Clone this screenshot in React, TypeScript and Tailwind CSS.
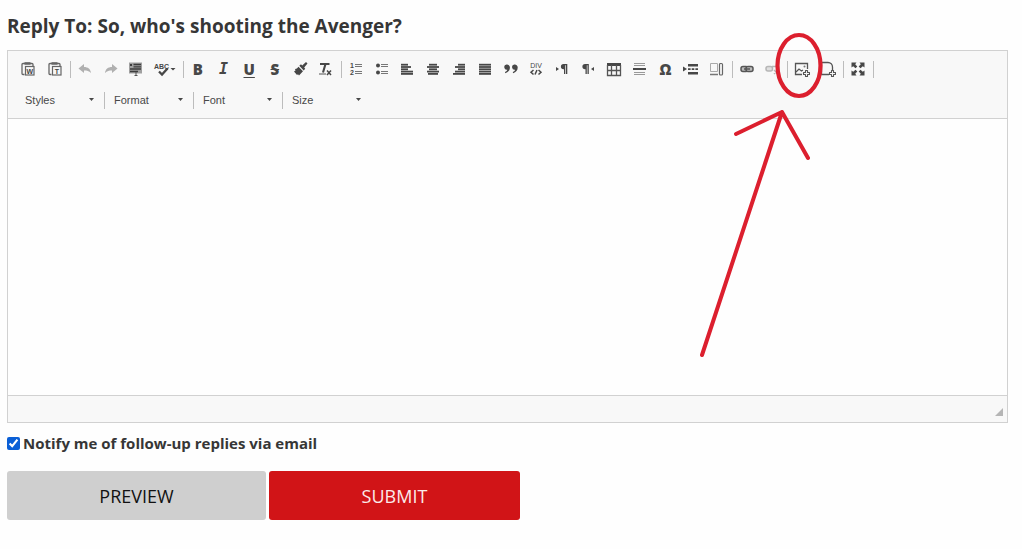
import { useState } from 'react';
import type { ReactNode } from 'react';

interface Tool {
  id: string;
  label: string;
  icon: ReactNode;
  disabled?: boolean;
  wide?: boolean;
}

interface ToolGroup {
  id: string;
  width: string;
  tools: Tool[];
}

interface Combo {
  id: string;
  options: string[];
}

function Svg({ children }: { children: ReactNode }) {
  return (
    <svg width="16" height="16" viewBox="0 0 16 16" fill="none" stroke="none" className="shrink-0">
      {children}
    </svg>
  );
}

function Glyph({ children, className = '' }: { children: ReactNode; className?: string }) {
  return <span className={`text-[15px] leading-4 font-extrabold ${className}`}>{children}</span>;
}

function Clipboard({ letter }: { letter: string }) {
  return (
    <Svg>
      <path d="M4.5 13.5H3a1 1 0 0 1-1-1V3.500a1 1 0 0 1 1-1h9a1 1 0 0 1 1 1v2" stroke="#666" strokeWidth="1.3" />
      <path d="M4.500 1.200h6v2.500h-6z" fill="#666" />
      <rect x="5.5" y="5.5" width="8.500" height="8.500" stroke="#666" strokeWidth="1.2" />
      <text x="9.800" y="12.500" textAnchor="middle" fontSize="7" fontWeight="bold" fontFamily="Liberation Sans, sans-serif" fill="#444">
        {letter}
      </text>
    </Svg>
  );
}

function Lines({ rows }: { rows: number[][] }) {
  return (
    <Svg>
      {rows.map(([x, width], i) => (
        <rect key={i} x={x} y={2.8 + i * 2.3} width={width} height="1.8" fill="#474747" />
      ))}
    </Svg>
  );
}

const plus = (
  <path d="M11.500 9.500h2v2h2v2h-2v2h-2v-2h-2v-2h2z" fill="#f8f8f8" stroke="#555" strokeWidth="1.100" strokeLinejoin="round" />
);

const groups: ToolGroup[] = [
  {
    id: 'clipboard',
    width: 'w-[53px]',
    tools: [
      { id: 'word', label: 'Paste from Word', icon: <Clipboard letter="W" /> },
      { id: 'plain', label: 'Paste as plain text', icon: <Clipboard letter="T" /> },
    ],
  },
  {
    id: 'undo',
    width: 'w-[109px]',
    tools: [
      {
        id: 'undo',
        label: 'Undo',
        disabled: true,
        icon: <Svg><path d="M1.5 7.5 7 3v3c4 0 6.500 2 7 6-2-2-4-2.500-7-2.500V12z" fill="#474747" /></Svg>,
      },
      {
        id: 'redo',
        label: 'Redo',
        disabled: true,
        icon: <Svg><path d="M14.500 7.500 9 3v3c-4 0-6.500 2-7 6 2-2 4-2.500 7-2.500V12z" fill="#474747" /></Svg>,
      },
      {
        id: 'select',
        label: 'Select all',
        icon: (
          <Svg>
            <rect x="1" y="1.500" width="13" height="11" fill="#a0a0a0" />
            <path d="M2 3h2v2H2zM5.500 2.800h7.500v1.500H5.500zM5.500 5.200h7.500v1.400H5.500zM2 7.300h11v1.500H2zM2 9.700h8v1.500H2z" fill="#3d3d3d" />
            <path d="M8 11v3.500M6.500 14.500h3" stroke="#555" />
          </Svg>
        ),
      },
      {
        id: 'spell',
        label: 'Check spelling',
        wide: true,
        icon: (
          <svg width="24" height="16" viewBox="0 0 24 16" fill="none">
            <text x="1" y="8" fontSize="7" fontWeight="bold" fontFamily="Liberation Sans, sans-serif" fill="#474747">ABC</text>
            <path d="m6 10.500 3 3 5.500-6" stroke="#474747" strokeWidth="2.300" />
            <path d="M17.500 7h5L20 9.500z" fill="#474747" />
          </svg>
        ),
      },
    ],
  },
  {
    id: 'basic',
    width: 'w-[154px]',
    tools: [
      { id: 'bold', label: 'Bold', icon: <Glyph>B</Glyph> },
      {
        id: 'italic',
        label: 'Italic',
        icon: <span className="font-['DejaVu_Sans_Mono',monospace] text-[15px] leading-4 font-bold italic">I</span>,
      },
      { id: 'underline', label: 'Underline', icon: <Glyph className="underline decoration-1 underline-offset-2">U</Glyph> },
      { id: 'strike', label: 'Strikethrough', icon: <Glyph className="line-through">S</Glyph> },
      {
        id: 'copyformat',
        label: 'Copy formatting',
        icon: (
          <Svg>
            <path d="M14.500 2.600 13 1 9.200 4.400 8 3.200 6.300 4.800l4.400 4.700 1.500-1.700-1-1.200z" fill="#474747" />
            <path d="M5.500 5.800 10 10.300l-4 4.200-1-1.200-1 .7-3-3.500 1.500-1-.5-1.500c2 0 2.500-1 3.500-2.200z" fill="#474747" />
          </Svg>
        ),
      },
      {
        id: 'clear',
        label: 'Remove format',
        icon: (
          <Svg>
            <path d="M2 3h9.500M7.500 3 5 11.500" stroke="#474747" strokeWidth="2.100" />
            <path d="M1 13H8" stroke="#777" strokeWidth="1.300" />
            <path d="m9 9.500 4 4.500m0-4.500-4 4.500" stroke="#474747" strokeWidth="1.500" />
          </Svg>
        ),
      },
    ],
  },
  {
    id: 'paragraph',
    width: 'w-[387px]',
    tools: [
      {
        id: 'ol',
        label: 'Numbered list',
        icon: (
          <Svg>
            <g fontSize="7" fontWeight="bold" fontFamily="Liberation Sans, sans-serif" fill="#474747">
              <text x="2" y="7">1</text>
              <text x="2" y="14">2</text>
            </g>
            <path d="M7 3.500h7M7 5.500h7M7 10.500h7M7 12.500h7" stroke="#777" strokeWidth="1.200" />
          </Svg>
        ),
      },
      {
        id: 'ul',
        label: 'Bulleted list',
        icon: (
          <Svg>
            <circle cx="4" cy="4.500" r="2" fill="#474747" />
            <circle cx="4" cy="11.500" r="2" fill="#474747" />
            <path d="M7 3.500h7M7 5.500h7M7 10.500h7M7 12.500h7" stroke="#777" strokeWidth="1.200" />
          </Svg>
        ),
      },
      { id: 'left', label: 'Align left', icon: <Lines rows={[[2, 7], [2, 10], [2, 7], [2, 12], [2, 12]]} /> },
      { id: 'center', label: 'Center', icon: <Lines rows={[[4, 8], [2, 12], [4, 8], [2, 12], [3, 10]]} /> },
      { id: 'right', label: 'Align right', icon: <Lines rows={[[7, 7], [4, 10], [7, 7], [4, 10], [2, 12]]} /> },
      { id: 'justify', label: 'Justify', icon: <Lines rows={[[2, 12], [2, 12], [2, 12], [2, 12], [2, 12]]} /> },
      {
        id: 'quote',
        label: 'Block quote',
        icon: (
          <Svg>
            <path d="M3.500 3.500a2.900 2.900 0 0 1 3.400 2.900c0 2.700-1.600 4.800-4.600 5.800l-.3-1.200C3.500 10.200 4.200 9.500 4.300 8.700a2.600 2.600 0 0 1-.8-5.200zM11.300 3.500a2.900 2.900 0 0 1 3.400 2.900c0 2.700-1.600 4.800-4.600 5.800l-.3-1.200c1.500-.8 2.200-1.500 2.300-2.300a2.600 2.600 0 0 1-.8-5.200z" fill="#474747" />
          </Svg>
        ),
      },
      {
        id: 'div',
        label: 'Create div container',
        icon: (
          <Svg>
            <text x="8" y="7" textAnchor="middle" fontSize="7" fontFamily="Liberation Sans, sans-serif" fill="#474747">DIV</text>
            <path d="M5.500 9 3 11.200l2.500 2.300M10.500 9l2.500 2.200-2.500 2.300M9 9l-2 4.500" stroke="#474747" strokeWidth="1.500" />
          </Svg>
        ),
      },
      {
        id: 'ltr',
        label: 'Text direction from left to right',
        icon: (
          <Svg>
            <path d="M2 6v4l3-2z" fill="#474747" />
            <path d="M9.500 3a2.600 2.600 0 0 0 0 5.200H10V13h1.300V4.200h.7V13h1.300V3z" fill="#474747" />
          </Svg>
        ),
      },
      {
        id: 'rtl',
        label: 'Text direction from right to left',
        icon: (
          <Svg>
            <path d="M14 6v4l-3-2z" fill="#474747" />
            <path d="M5 3a2.600 2.600 0 0 0 0 5.200h.5V13h1.300V4.200h.7V13h1.300V3z" fill="#474747" />
          </Svg>
        ),
      },
      {
        id: 'table',
        label: 'Table',
        icon: (
          <Svg>
            <path d="M1 2h14v3H1z" fill="#474747" />
            <path d="M1.500 4v10.500h13V4M5.500 4v10.500M10.500 4v10.500M1 9.500h14" stroke="#555" strokeWidth="1.300" />
          </Svg>
        ),
      },
      {
        id: 'hr',
        label: 'Insert horizontal line',
        icon: (
          <Svg>
            <path d="M2 2.500h11M2 4.500h11M2 11.500h11M2 13.500h11" stroke="#999" />
            <path d="M1 7h13v2H1z" fill="#474747" />
          </Svg>
        ),
      },
      { id: 'char', label: 'Insert special character', icon: <Glyph>Ω</Glyph> },
      {
        id: 'pagebreak',
        label: 'Insert page break',
        icon: (
          <Svg>
            <path d="M0 5.500v5L4 8z" fill="#474747" />
            <path d="M5 3h10v2.500H5zM5 11h10v2.500H5z" fill="#474747" />
            <path d="M5 8.200h10" stroke="#474747" strokeWidth="1.700" strokeDasharray="2.600 1.100" />
          </Svg>
        ),
      },
      {
        id: 'layout',
        label: 'Page layout',
        icon: (
          <Svg>
            <path d="M1.500 2.500h7v8h-7z" stroke="#aaa" />
            <path d="M1 13.500h8" stroke="#777" strokeWidth="1.500" />
            <rect x="10.500" y="2.500" width="3" height="11.500" rx="1" stroke="#666" strokeWidth="1.200" />
          </Svg>
        ),
      },
    ],
  },
  {
    id: 'links',
    width: 'w-[51px]',
    tools: [
      {
        id: 'link',
        label: 'Link',
        icon: (
          <Svg>
            <rect x="2" y="5.500" width="7" height="5" rx="2" fill="#bbb" stroke="#555" strokeWidth="1.500" />
            <rect x="7" y="5.500" width="7" height="5" rx="2" fill="#bbb" stroke="#555" strokeWidth="1.500" />
            <path d="M5 8h6" stroke="#555" strokeWidth="1.500" />
          </Svg>
        ),
      },
      {
        id: 'unlink',
        label: 'Unlink',
        disabled: true,
        icon: (
          <Svg>
            <rect x="2" y="5.500" width="6.500" height="4.500" rx="2" fill="#bbb" stroke="#555" strokeWidth="1.500" />
            <path d="M8 5.500h3.500a2 2 0 0 1 2 3M10 9l4 4m0-4-4 4" stroke="#555" strokeWidth="1.400" />
          </Svg>
        ),
      },
    ],
  },
  {
    id: 'media',
    width: 'w-[52px]',
    tools: [
      {
        id: 'image',
        label: 'Add image',
        icon: (
          <Svg>
            <path d="M8 13.500H1.500v-11h12V8" stroke="#555" strokeWidth="1.300" />
            <circle cx="10.500" cy="5.500" r="1" fill="#777" />
            <path d="m2 11 3-3 2.500 2 1.500-1" stroke="#555" strokeWidth="1.200" />
            {plus}
          </Svg>
        ),
      },
      {
        id: 'file',
        label: 'Add file',
        icon: (
          <Svg>
            <path d="M9 13.500H1.500v-12H8c2.500 0 4.500 2 4.500 4.500V9" stroke="#555" strokeWidth="1.300" />
            {plus}
          </Svg>
        ),
      },
    ],
  },
  {
    id: 'view',
    width: 'w-[26px]',
    tools: [
      {
        id: 'maximize',
        label: 'Maximize',
        icon: (
          <Svg>
            <path d="M1.500 1.500h5L5.200 3.200 7.300 5.500 5.500 7.300 3.200 5.200 1.500 6.500zM14.500 1.500v5l-1.700-1.300-2.300 2.100-1.800-1.800 2.100-2.300L9.500 1.500zM1.500 14.500v-5l1.700 1.300 2.300-2.100 1.800 1.800-2.100 2.300L6.500 14.500zM14.500 14.500h-5l1.300-1.700-2.100-2.300 1.800-1.800 2.300 2.100L14.500 9.500z" fill="#474747" />
          </Svg>
        ),
      },
    ],
  },
];

const combos: Combo[] = [
  { id: 'styles', options: ['Styles', 'Marker', 'Big', 'Small'] },
  { id: 'format', options: ['Format', 'Normal', 'Heading 1', 'Heading 2'] },
  { id: 'font', options: ['Font', 'Arial', 'Georgia', 'Verdana'] },
  { id: 'size', options: ['Size', '8', '10', '12'] },
];

function Separator() {
  return <span className="ml-0.5 mr-px h-[17px] w-px shrink-0 bg-[#bcbcbc]" />;
}

function Toolbar() {
  return (
    <div className="flex flex-col gap-[3px] border-b border-[#d1d1d1] bg-[#f8f8f8] px-[7px] py-1">
      <div className="flex flex-wrap">
        {groups.map((group) => (
          <div key={group.id} className="flex h-7 items-center">
            <div className={`flex ${group.width}`}>
              {group.tools.map((tool) => (
                <button
                  key={tool.id}
                  type="button"
                  aria-label={tool.label}
                  disabled={tool.disabled}
                  className={`flex h-7 items-center justify-center text-[#474747] disabled:opacity-40 ${
                    tool.wide ? 'w-8 shrink-0' : 'min-w-0 flex-1'
                  }`}
                >
                  {tool.icon}
                </button>
              ))}
            </div>
            <Separator />
          </div>
        ))}
      </div>

      <div className="flex flex-wrap pl-0.5">
        {combos.map((combo, i) => (
          <div key={combo.id} className="flex h-7 items-center">
            <div className="relative w-[85px]">
              <select
                aria-label={combo.options[0]}
                className="h-7 w-full appearance-none bg-transparent pl-2 font-['Liberation_Sans',sans-serif] text-[11px] text-[#484848]"
              >
                {combo.options.map((option) => (
                  <option key={option}>{option}</option>
                ))}
              </select>
              <svg width="5" height="3" viewBox="0 0 5 3" className="pointer-events-none absolute top-3 right-2">
                <path d="M0 0h5L2.500 3z" fill="#474747" />
              </svg>
            </div>
            {i < combos.length - 1 && <Separator />}
          </div>
        ))}
      </div>
    </div>
  );
}

/* Hand-drawn circle and arrow pointing at the image button */
function Annotation() {
  return (
    <svg
      width="120"
      height="340"
      viewBox="700 30 120 340"
      fill="none"
      stroke="#dc1f2e"
      className="pointer-events-none absolute top-[30px] left-[700px] overflow-visible"
    >
      <ellipse cx="799" cy="65.500" rx="21.500" ry="30.500" strokeWidth="4.200" />
      <path d="M702 355 782 112M736 134l46-22 26 46" strokeWidth="4" strokeLinecap="round" strokeLinejoin="round" />
    </svg>
  );
}

export default function App() {
  const [body, setBody] = useState('');
  const [notify, setNotify] = useState(true);

  return (
    <div className="relative min-h-screen bg-[#fefefe] pr-3.5 pb-6 pl-[7px] font-['Open_Sans',sans-serif] text-[#363636]">
      <form onSubmit={(e) => e.preventDefault()}>
        <h1 className="pt-3 pb-2.5 text-[19px] leading-7 font-bold">Reply To: So, who's shooting the Avenger?</h1>

        <div className="border border-[#d1d1d1]">
          <Toolbar />
          <textarea
            aria-label="Reply"
            value={body}
            onChange={(e) => setBody(e.target.value)}
            className="block h-[276px] w-full resize-none bg-[#fefefe] p-5 text-sm outline-none"
          />
          <div className="flex h-[27px] items-end justify-end border-t border-[#d1d1d1] bg-[#f8f8f8] px-1 py-1.5">
            <svg width="8" height="8" viewBox="0 0 8 8">
              <path d="M8 0v8H0z" fill="#b5b5b5" />
            </svg>
          </div>
        </div>

        <label className="mt-2.5 flex w-fit items-center gap-[3px] text-[15px] leading-5 font-bold">
          <input
            type="checkbox"
            checked={notify}
            onChange={(e) => setNotify(e.target.checked)}
            className="size-[13px] accent-[#0a5fd6]"
          />
          Notify me of follow-up replies via email
        </label>

        <div className="mt-[18px] flex flex-wrap gap-[3px]">
          <button type="button" className="h-[49px] w-[259px] rounded-[3px] bg-[#cfcfcf] text-lg text-[#111]">
            PREVIEW
          </button>
          <button type="submit" className="h-[49px] w-[251px] rounded-[3px] bg-[#d11417] text-lg text-[#fbeaea]">
            SUBMIT
          </button>
        </div>
      </form>
      <Annotation />
    </div>
  );
}
